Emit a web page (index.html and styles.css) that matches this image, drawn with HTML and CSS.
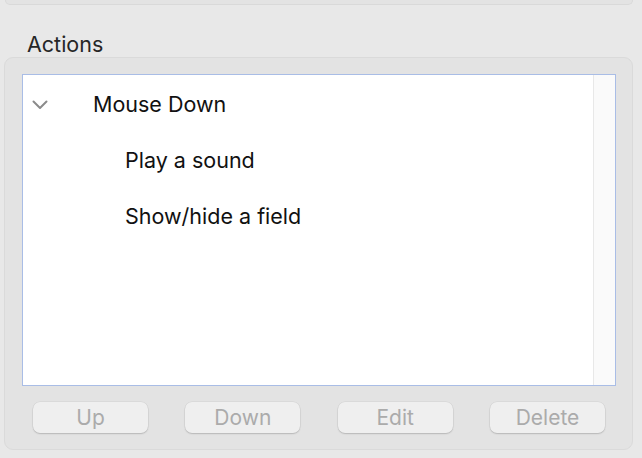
FILE: index.html
```html
<!DOCTYPE html>
<html>
<head>
<meta charset="utf-8">
<link rel="stylesheet" href="styles.css">
</head>
<body>
<div class="window">
  <div class="top-box"></div>
  <div class="section-label">Actions</div>
  <div class="panel">
    <div class="list">
      <div class="list-content">
        <div class="row parent">
          <span class="chevron">
            <svg width="16" height="10" viewBox="0 0 16 10"><polyline points="1.5,1.5 8,8 14.5,1.5" fill="none" stroke="#8b8b8b" stroke-width="2" stroke-linecap="round" stroke-linejoin="round"/></svg>
          </span>
          <span class="row-text">Mouse Down</span>
        </div>
        <div class="row child"><span class="row-text">Play a sound</span></div>
        <div class="row child"><span class="row-text">Show/hide a field</span></div>
      </div>
      <div class="scroll-track"></div>
    </div>
    <div class="buttons">
      <button class="btn">Up</button>
      <button class="btn">Down</button>
      <button class="btn">Edit</button>
      <button class="btn">Delete</button>
    </div>
  </div>
</div>
</body>
</html>
```

FILE: styles.css
```css
html, body {
  margin: 0;
  padding: 0;
  background: #e8e8e8;
}
body {
  width: 642px;
  height: 458px;
  overflow: hidden;
  font-family: Inter, "Liberation Sans", sans-serif;
}
.window {
  display: flex;
  flex-direction: column;
}
.top-box {
  height: 5px;
  margin: 0 9px 0 5px;
  box-sizing: border-box;
  background: #e3e3e3;
  border: 1px solid #d9d9d9;
  border-top: none;
  border-radius: 0 0 8px 8px;
}
.section-label {
  margin: 27px 0 1px 27px;
  font-size: 21.5px;
  line-height: 24px;
  color: #262626;
}
.panel {
  margin: 0 9px 0 4px;
  background: #e3e3e3;
  border: 1px solid #dadada;
  border-radius: 9px;
  padding: 16px 16px 16px 17px;
  display: flex;
  flex-direction: column;
}
.list {
  height: 312px;
  box-sizing: border-box;
  border: 1px solid #a9bde6;
  background: #ffffff;
  display: flex;
}
.list-content {
  flex: 1;
  padding-top: 1px;
}
.scroll-track {
  width: 21px;
  background: #fafafa;
  border-left: 1px solid #e8e8e8;
}
.row {
  display: flex;
  align-items: center;
  height: 56px;
  font-size: 21.5px;
  line-height: 56px;
  color: #111111;
}
.parent {
  padding-left: 9px;
}
.chevron {
  width: 61px;
  display: flex;
  align-items: center;
  padding-top: 1px;
}
.child {
  padding-left: 102px;
}
.buttons {
  display: flex;
  justify-content: space-between;
  margin-top: 16px;
  padding: 0 11px 0 11px;
}
.btn {
  width: 115px;
  height: 31px;
  padding: 0;
  border: none;
  border-radius: 7px;
  background: #efefef;
  box-shadow: 0 0 0 0.5px rgba(0,0,0,0.07), 0 1px 1.5px rgba(0,0,0,0.16);
  font-family: Inter, "Liberation Sans", sans-serif;
  font-size: 21px;
  color: #ababab;
}
```
